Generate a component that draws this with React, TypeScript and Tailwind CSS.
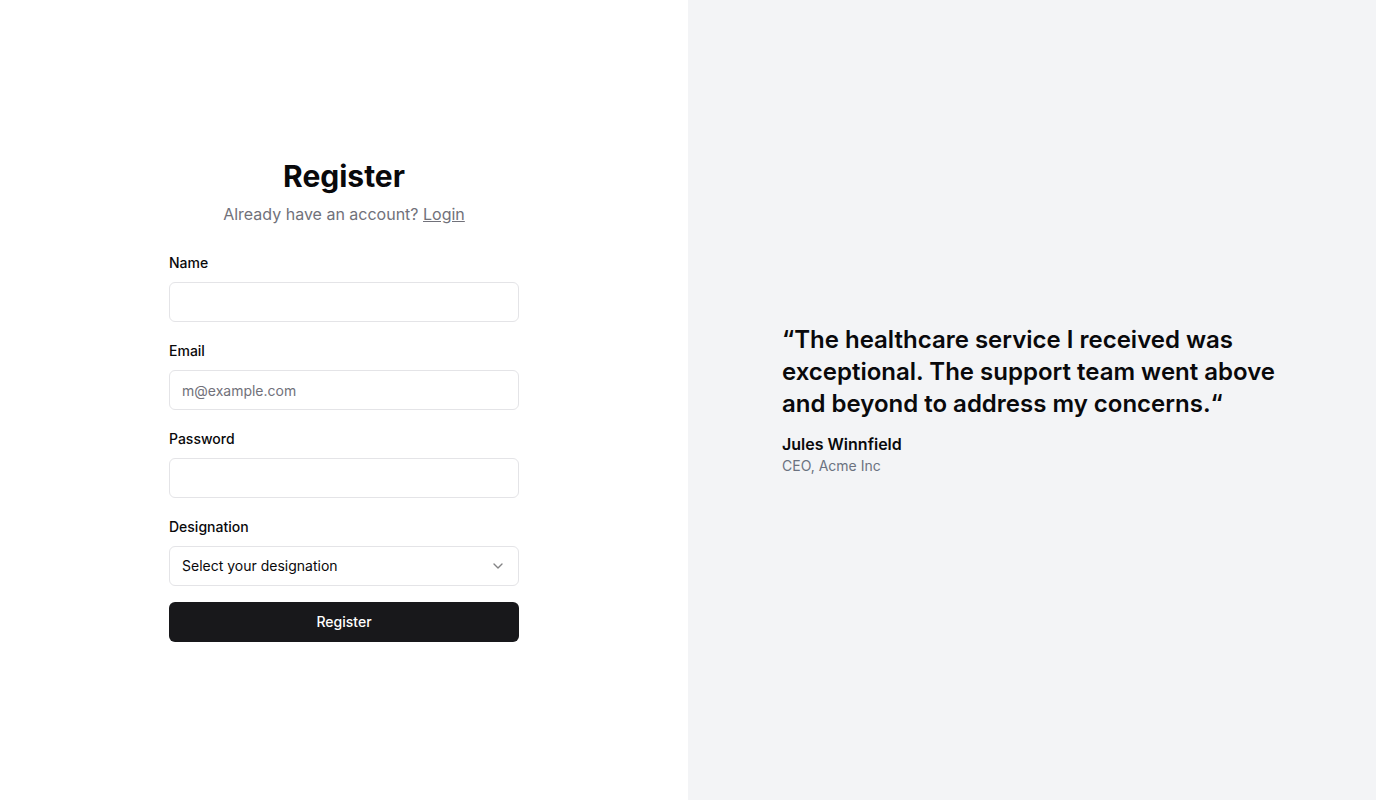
import React from "react";

export default function App() {
  return (
    <div
      className="grid grid-cols-2 w-full h-[800px] text-[#09090b]"
      style={{ fontFamily: "Inter, 'Noto Sans', sans-serif" }}
    >
      <div className="bg-white flex items-center justify-center">
        <div className="w-[350px] flex flex-col">
          <div className="flex flex-col items-center gap-2">
            <h1 className="text-3xl font-bold leading-9">Register</h1>
            <p className="text-base leading-6 text-[#71717a]">
              Already have an account?{" "}
              <a href="#" className="underline">Login</a>
            </p>
          </div>
          <div className="flex flex-col mt-[27px]">
            <label className="text-sm font-medium leading-5">Name</label>
            <input className="mt-[9px] h-10 w-full rounded-md border border-[#e4e4e7] px-3 text-sm outline-none" />
            <label className="mt-[19px] text-sm font-medium leading-5">Email</label>
            <input
              placeholder="m@example.com"
              className="mt-[9px] h-10 w-full rounded-md border border-[#e4e4e7] px-3 text-sm outline-none placeholder:text-[#71717a]"
            />
            <label className="mt-[19px] text-sm font-medium leading-5">Password</label>
            <input type="password" className="mt-[9px] h-10 w-full rounded-md border border-[#e4e4e7] px-3 text-sm outline-none" />
            <label className="mt-[19px] text-sm font-medium leading-5">Designation</label>
            <button className="mt-[9px] h-10 w-full rounded-md border border-[#e4e4e7] px-3 text-sm flex items-center justify-between text-left">
              <span>Select your designation</span>
              <svg width="16" height="16" viewBox="0 0 24 24" fill="none" stroke="currentColor" strokeWidth="2" strokeLinecap="round" strokeLinejoin="round" className="opacity-50">
                <path d="m6 9 6 6 6-6" />
              </svg>
            </button>
            <button className="mt-4 h-10 w-full rounded-md bg-[#18181b] text-white text-sm font-medium">
              Register
            </button>
          </div>
        </div>
      </div>
      <div className="bg-[#f3f4f6] flex items-center justify-center">
        <div className="w-[500px] flex flex-col">
          <p className="text-2xl font-semibold leading-8">
            “The healthcare service I received was exceptional. The support team went above and beyond to address my concerns.“
          </p>
          <p className="mt-3 text-base font-semibold leading-6">Jules Winnfield</p>
          <p className="text-sm leading-5 text-[#6b7280]">CEO, Acme Inc</p>
        </div>
      </div>
    </div>
  );
}
